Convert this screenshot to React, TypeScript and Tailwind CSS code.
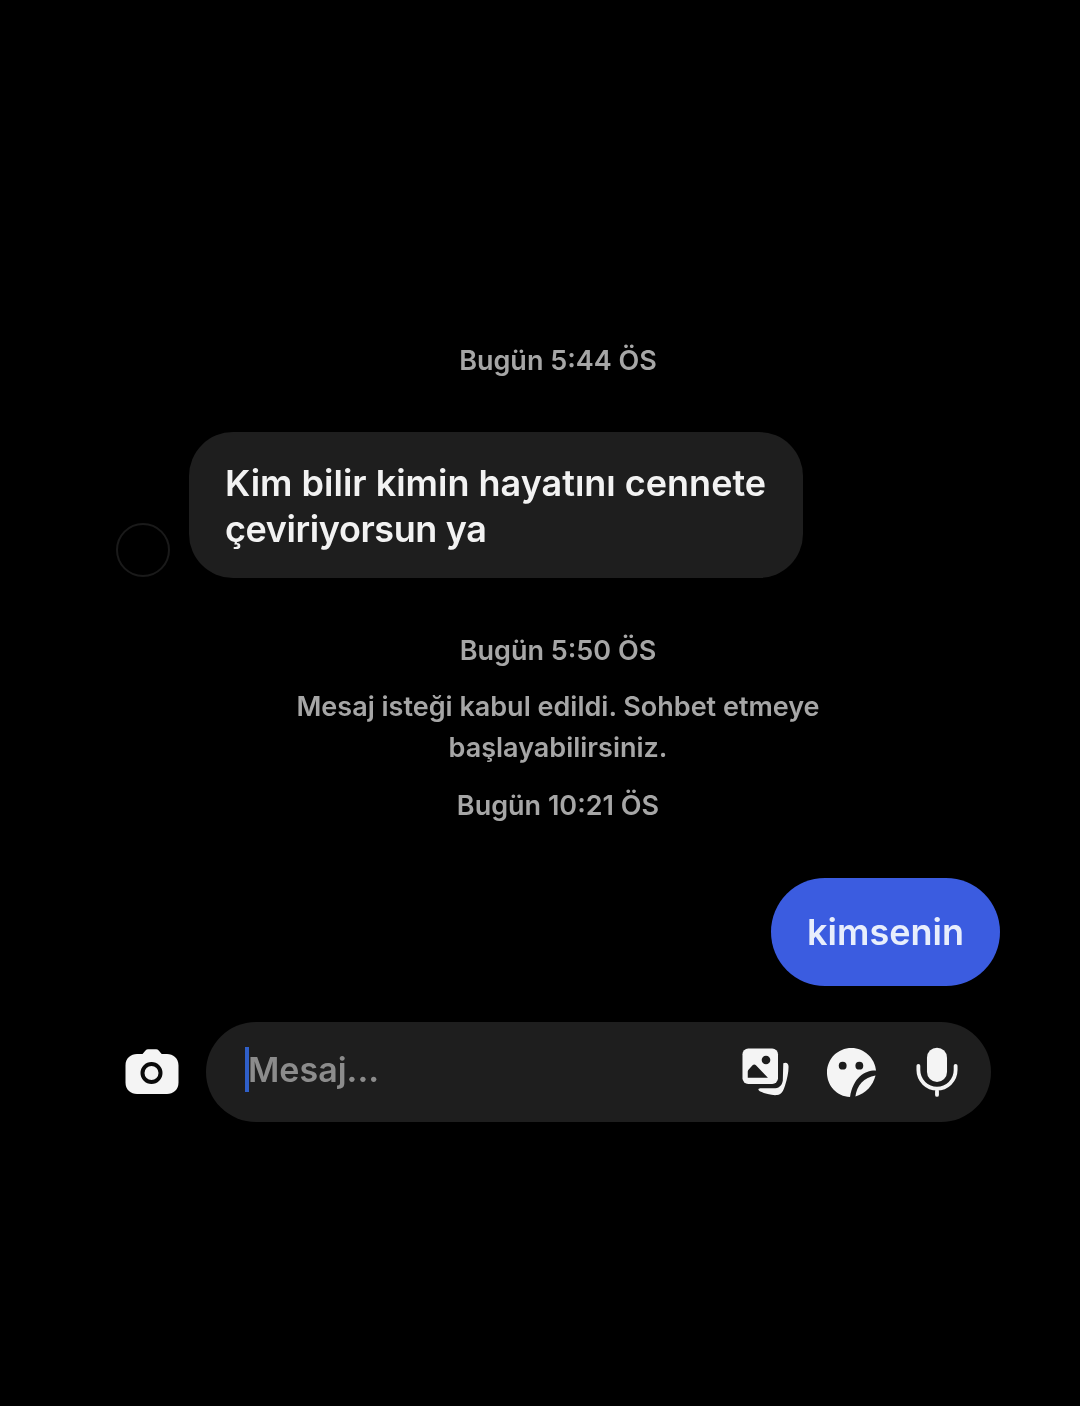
const fontStack = { fontFamily: 'Inter, Roboto, sans-serif' };

function CameraIcon() {
  return (
    <svg width="54" height="46" viewBox="0 0 54 46">
      <path
        d="M12 5h5.500l3-3.600c.7-.8 1.600-1.200 2.600-1.200h8c1 0 1.900.4 2.600 1.200l3 3.600H42c6 0 11.500 4 11.500 11.500v17C53.500 41 48 45 42 45H12C6 45 .5 41 .5 33.500v-17C.5 9 6 5 12 5z"
        fill="#f4f4f4"
      />
      <circle cx="26.500" cy="24" r="9" fill="none" stroke="#0a0a0a" strokeWidth="4" />
    </svg>
  );
}

function GalleryIcon() {
  return (
    <svg width="48" height="48" viewBox="0 0 50 50">
      <rect x="0.500" y="0.500" width="37" height="37" rx="6" fill="#f4f4f4" />
      <circle cx="25" cy="12.500" r="4.500" fill="#1c1c1c" />
      <path d="M6 31v-6.500c0-1 .4-1.600 1-2.200l4-4.300c1-1 2.500-1 3.500 0L27 31z" fill="#1c1c1c" />
      <path
        d="M43 16c3-1.500 5.500 0 5.500 3.500 0 6-1.500 13-3.500 19-1.500 5-3.500 10-8.500 10.500-5 .5-12-1-18-4-2-1-2-2.800.5-3H33c5 0 8.500-2.500 9.500-8z"
        fill="#f4f4f4"
      />
    </svg>
  );
}

function StickerIcon() {
  return (
    <svg width="51" height="51" viewBox="0 0 52 52">
      <path
        d="M26 1C39 1 50 11.500 51 24c-11-.5-23 6.500-26.500 27C11 50.500 1 39.500 1 26 1 12 12 1 26 1z"
        fill="#f4f4f4"
      />
      <circle cx="17" cy="19" r="4" fill="#1c1c1c" />
      <circle cx="34" cy="19" r="4" fill="#1c1c1c" />
      <path d="M30 50.500c1-11 9-20 20.500-21.500C48 39 41 47 30 50.500z" fill="#f4f4f4" />
    </svg>
  );
}

function MicIcon() {
  return (
    <svg width="42" height="50" viewBox="0 0 44 52">
      <rect x="11.500" y="0.500" width="21" height="36" rx="10.500" fill="#f4f4f4" />
      <path
        d="M2.500 19.500v4.500c0 11 9 19.500 19.500 19.500s19.500-8.500 19.500-19.500v-4.500M22 43.500V50"
        fill="none"
        stroke="#f4f4f4"
        strokeWidth="4"
        strokeLinecap="round"
      />
    </svg>
  );
}

function Stamp({ text, className }: { text: string; className: string }) {
  return (
    <div className={`pl-[36px] text-center text-[27px] leading-[32px] font-semibold text-[#a6a6a6] ${className}`}>
      {text}
    </div>
  );
}

export default function App() {
  return (
    <div className="flex h-[1406px] w-[1080px] flex-col overflow-hidden bg-black blur-[0.5px]" style={fontStack}>
      <Stamp text="Bugün 5:44 ÖS" className="mt-[345px]" />

      {/* incoming message */}
      <div className="mt-[55px] flex items-end pl-[116px]">
        <div className="mb-[1px] h-[54px] w-[54px] rounded-full border-2 border-[#1a1a1a]" />
        <div className="ml-[19px] h-[146px] w-[614px] rounded-[44px] bg-[#1e1e1e] pl-[36px] pt-[28px] text-[36px] leading-[46px] font-semibold text-[#f2f2f2]">
          Kim bilir kimin hayatını cennete
          <br />
          <span className="tracking-[-0.4px]">çeviriyorsun ya</span>
        </div>
      </div>

      <Stamp text="Bugün 5:50 ÖS" className="mt-[57px]" />
      <div className="mt-[19px] pl-[36px] text-center text-[27px] leading-[41px] font-semibold text-[#a6a6a6]">
        Mesaj isteği kabul edildi. Sohbet etmeye
        <br />
        başlayabilirsiniz.
      </div>
      <Stamp text="Bugün 10:21 ÖS" className="mt-[22px]" />

      {/* outgoing message */}
      <div className="mt-[56px] flex justify-end pr-[80px]">
        <div className="flex h-[108px] w-[229px] items-center justify-center rounded-[54px] bg-[#3b5ce0] text-[36px] font-semibold text-[#e8eefc]">
          kimsenin
        </div>
      </div>

      {/* composer */}
      <div className="mt-[36px] flex items-center pl-[125px]">
        <CameraIcon />
        <div className="ml-[27px] flex h-[100px] w-[785px] items-center rounded-[50px] bg-[#1e1e1e] pl-[39px]">
          <div className="mb-[6px] h-[45px] w-[4px] bg-[#2f5fc8]" />
          <div className="-ml-[1px] pb-[6px] text-[34px] font-semibold text-[#8c8c8c]">Mesaj...</div>
          <div className="ml-auto mr-[33px] flex items-center">
            <GalleryIcon />
            <div className="ml-[36px]">
              <StickerIcon />
            </div>
            <div className="ml-[39px]">
              <MicIcon />
            </div>
          </div>
        </div>
      </div>
    </div>
  );
}
